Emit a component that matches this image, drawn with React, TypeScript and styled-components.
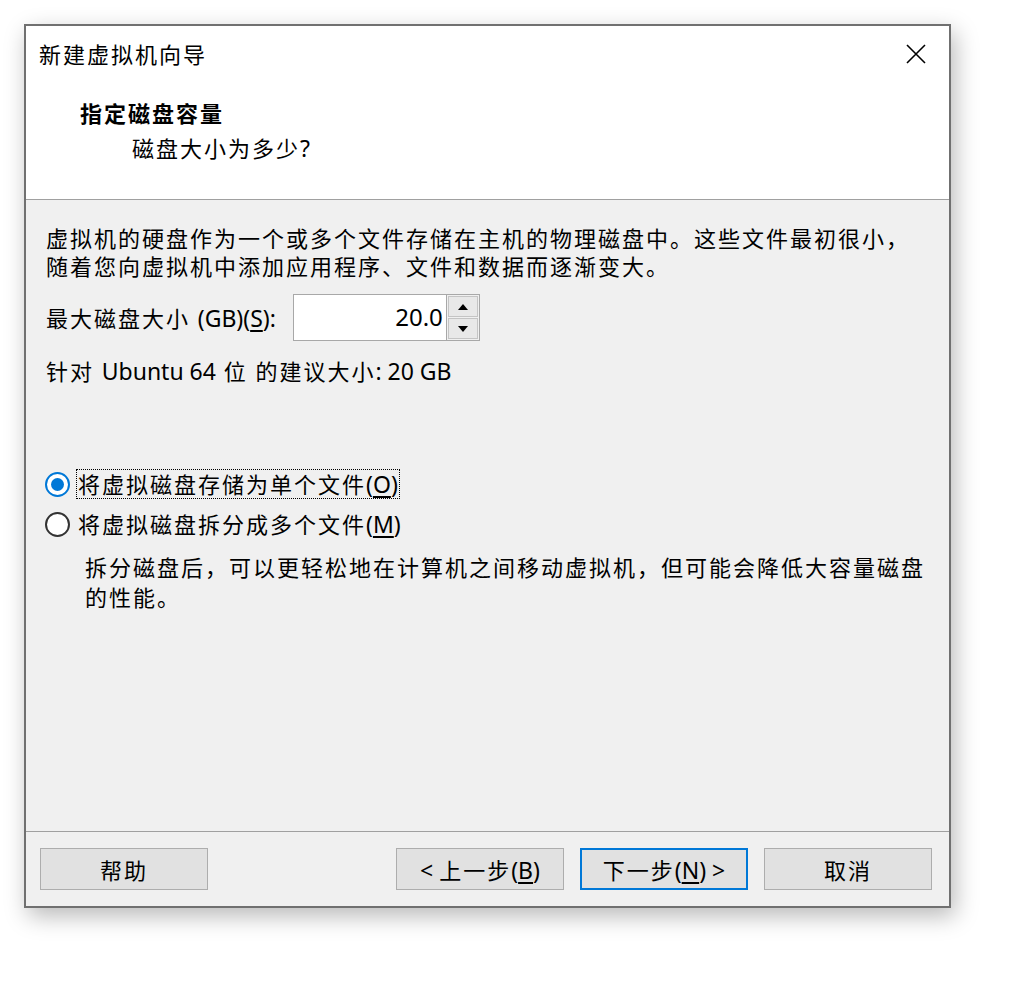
import styled, { createGlobalStyle } from 'styled-components'

const GlobalStyle = createGlobalStyle`
  html, body {
    margin: 0;
    padding: 0;
    background: #ffffff;
  }
  body {
    font-family: "Noto Sans", "Noto Sans CJK SC", sans-serif;
    color: #000;
  }
`

const Page = styled.div`
  padding: 24px 0 40px 24px;
`

const Dialog = styled.div`
  width: 923px;
  border: 2px solid #707070;
  background: #f0f0f0;
  box-shadow: 4px 8px 22px rgba(0, 0, 0, 0.28);
  display: flex;
  flex-direction: column;
`

const Header = styled.div`
  height: 174px;
  box-sizing: border-box;
  background: #ffffff;
  border-bottom: 1px solid #a0a0a0;
  padding: 13px 0 0 0;
`

const TitleRow = styled.div`
  display: flex;
  align-items: center;
  justify-content: space-between;
  padding: 0 23px 0 13px;
  height: 30px;
`

const Title = styled.div`
  font-size: 22px;
  letter-spacing: 2px;
  line-height: 30px;
`

const CloseButton = styled.div`
  width: 20px;
  height: 20px;
  display: flex;
  align-items: center;
  justify-content: center;
`

const Heading = styled.div`
  margin: 29px 0 0 54px;
  font-size: 22px;
  font-weight: 700;
  letter-spacing: 2px;
  line-height: 30px;
`

const SubHeading = styled.div`
  margin: 5px 0 0 106px;
  font-size: 22px;
  letter-spacing: 2px;
  line-height: 30px;
`

const Body = styled.div`
  height: 631px;
  box-sizing: border-box;
  padding: 24px 20px 0 20px;
  font-size: 22px;
  letter-spacing: 2px;
`

const Paragraph = styled.p<{ $lh?: number }>`
  margin: 0;
  line-height: ${(p) => p.$lh ?? 28}px;
`

const SizeRow = styled.div`
  display: flex;
  align-items: center;
  margin-top: 14px;
  height: 47px;
`

const SizeLabel = styled.label`
  line-height: 30px;
  margin-right: 17px;
`

const Latin = styled.span`
  letter-spacing: 0;
  font-size: 23px;
`

const U = styled.span`
  text-decoration: underline;
  text-underline-offset: 3px;
`

const NumberBox = styled.div`
  display: flex;
  height: 47px;
`

const NumberInput = styled.div`
  width: 154px;
  box-sizing: border-box;
  border: 1px solid #a8a8a8;
  background: #fff;
  display: flex;
  align-items: center;
  justify-content: flex-end;
  padding: 0 3px 2px 0;
  font-size: 24px;
  letter-spacing: 0;
`

const Spinner = styled.div`
  width: 33px;
  box-sizing: border-box;
  border: 1px solid #a8a8a8;
  border-left: none;
  display: flex;
  flex-direction: column;
  gap: 1px;
  padding: 1px;
  background: #f0f0f0;
`

const SpinButton = styled.div`
  flex: 1;
  border: 1px solid #c4c4c4;
  background: #e8e8e8;
  display: flex;
  align-items: center;
  justify-content: center;
`

const Arrow = styled.span<{ $down?: boolean }>`
  width: 0;
  height: 0;
  border-left: 5px solid transparent;
  border-right: 5px solid transparent;
  ${(p) =>
    p.$down ? 'border-top: 6px solid #000;' : 'border-bottom: 6px solid #000;'}
`

const Recommend = styled.div`
  margin-top: 16px;
  line-height: 28px;
`

const Options = styled.div`
  margin-top: 84px;
  display: flex;
  flex-direction: column;
  gap: 10px;
`

const RadioRow = styled.div`
  display: flex;
  align-items: center;
  height: 30px;
  margin-left: -1px;
`

const RadioCircle = styled.span<{ $checked?: boolean }>`
  width: 25px;
  height: 25px;
  box-sizing: border-box;
  border-radius: 50%;
  border: 2px solid ${(p) => (p.$checked ? '#0078d7' : '#333333')};
  background: #fff;
  display: flex;
  align-items: center;
  justify-content: center;
  margin-right: 6px;
  &::after {
    content: '';
    width: 13px;
    height: 13px;
    border-radius: 50%;
    background: ${(p) => (p.$checked ? '#0078d7' : 'transparent')};
  }
`

const RadioLabel = styled.span<{ $focused?: boolean }>`
  line-height: 28px;
  padding: 0 1px;
  border: 1px dotted ${(p) => (p.$focused ? '#000' : 'transparent')};
`

const Description = styled.div`
  margin: 13px 0 0 39px;
`

const Footer = styled.div`
  border-top: 1px solid #a0a0a0;
  height: 75px;
  box-sizing: border-box;
  padding: 16px 17px 0 14px;
  display: flex;
  gap: 16px;
`

const Button = styled.button<{ $primary?: boolean; $push?: boolean }>`
  width: 168px;
  height: 42px;
  box-sizing: border-box;
  border: ${(p) => (p.$primary ? '2px solid #0078d7' : '1px solid #adadad')};
  background: #e1e1e1;
  font-family: inherit;
  font-size: 22px;
  letter-spacing: 2px;
  color: #000;
  padding: 0;
  margin-left: ${(p) => (p.$push ? 'auto' : '0')};
`

export default function App() {
  return (
    <>
      <GlobalStyle />
      <Page>
        <Dialog>
          <Header>
            <TitleRow>
              <Title>新建虚拟机向导</Title>
              <CloseButton>
                <svg width="20" height="20" viewBox="0 0 20 20">
                  <path d="M1 1 L19 19 M19 1 L1 19" stroke="#000" strokeWidth="1.6" fill="none" />
                </svg>
              </CloseButton>
            </TitleRow>
            <Heading>指定磁盘容量</Heading>
            <SubHeading>
              磁盘大小为多少<Latin>?</Latin>
            </SubHeading>
          </Header>
          <Body>
            <Paragraph>
              虚拟机的硬盘作为一个或多个文件存储在主机的物理磁盘中。这些文件最初很小，
              <br />
              随着您向虚拟机中添加应用程序、文件和数据而逐渐变大。
            </Paragraph>
            <SizeRow>
              <SizeLabel>
                最大磁盘大小 <Latin>(GB)(<U>S</U>):</Latin>
              </SizeLabel>
              <NumberBox>
                <NumberInput>20.0</NumberInput>
                <Spinner>
                  <SpinButton>
                    <Arrow />
                  </SpinButton>
                  <SpinButton>
                    <Arrow $down />
                  </SpinButton>
                </Spinner>
              </NumberBox>
            </SizeRow>
            <Recommend>
              针对 <Latin>Ubuntu 64</Latin> 位 的建议大小<Latin>: 20 GB</Latin>
            </Recommend>
            <Options>
              <RadioRow>
                <RadioCircle $checked />
                <RadioLabel $focused>
                  将虚拟磁盘存储为单个文件<Latin>(<U>O</U>)</Latin>
                </RadioLabel>
              </RadioRow>
              <RadioRow>
                <RadioCircle />
                <RadioLabel>
                  将虚拟磁盘拆分成多个文件<Latin>(<U>M</U>)</Latin>
                </RadioLabel>
              </RadioRow>
            </Options>
            <Description>
              <Paragraph $lh={30}>
                拆分磁盘后，可以更轻松地在计算机之间移动虚拟机，但可能会降低大容量磁盘
                <br />
                的性能。
              </Paragraph>
            </Description>
          </Body>
          <Footer>
            <Button>帮助</Button>
            <Button $push>
              <Latin>&lt; </Latin>上一步<Latin>(<U>B</U>)</Latin>
            </Button>
            <Button $primary>
              下一步<Latin>(<U>N</U>) &gt;</Latin>
            </Button>
            <Button>取消</Button>
          </Footer>
        </Dialog>
      </Page>
    </>
  )
}
